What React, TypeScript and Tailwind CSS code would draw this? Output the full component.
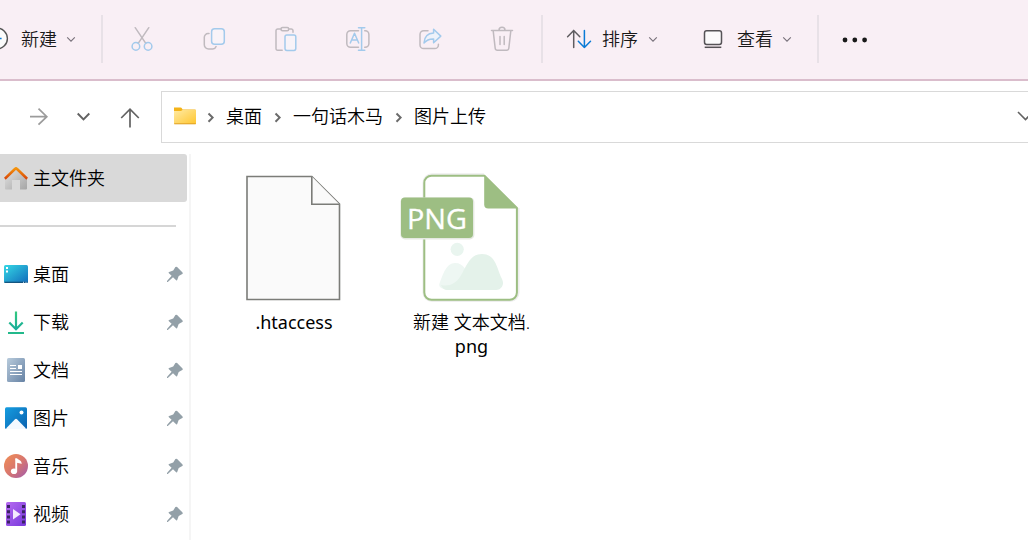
import React from "react";

type IconProps = { children: React.ReactNode; className?: string };

function ToolIcon({ children, className = "" }: IconProps) {
  return (
    <svg
      className={`size-8 shrink-0 ${className}`}
      viewBox="0 0 32 32"
      fill="none"
      stroke="#c0babf"
      strokeWidth="1.5"
      strokeLinecap="round"
      strokeLinejoin="round"
    >
      {children}
    </svg>
  );
}

const BLUE = "#a3caec";

const actions: { name: string; icon: React.ReactNode }[] = [
  {
    name: "cut",
    icon: (
      <>
        <path d="M9.2 4.7 19.8 20.4M22.8 4.7 12.2 20.4" />
        <circle cx="9.9" cy="23.4" r="3.8" stroke={BLUE} />
        <circle cx="22.1" cy="23.4" r="3.8" stroke={BLUE} />
      </>
    ),
  },
  {
    name: "copy",
    icon: (
      <>
        <path d="M11 10.6h-1a3.7 3.7 0 0 0-3.7 3.7v7.4a4.3 4.3 0 0 0 4.3 4.3h4.2a3.6 3.6 0 0 0 3.3-2.4" />
        <rect x="13.6" y="5.7" width="12.7" height="15.6" rx="3" fill="#f8f3f8" stroke={BLUE} />
      </>
    ),
  },
  {
    name: "paste",
    icon: (
      <>
        <path d="M11 6H7.7A1.7 1.7 0 0 0 6 7.7v17.6a1.7 1.7 0 0 0 1.7 1.9h4.5M18.8 6h2.5A1.7 1.7 0 0 1 23 7.7v1.5" />
        <rect x="11" y="4.6" width="7.7" height="3.2" rx="1.5" />
        <rect x="15" y="12" width="10.8" height="15.4" rx="1.8" fill="#f8f3f8" stroke={BLUE} />
      </>
    ),
  },
  {
    name: "rename",
    icon: (
      <>
        <path d="M16.5 7.7h-8a3.7 3.7 0 0 0-3.7 3.7v9.2a3.7 3.7 0 0 0 3.7 3.7h8M22.7 7.7h.5a3.7 3.7 0 0 1 3.7 3.7v9.2a3.7 3.7 0 0 1-3.7 3.7h-.5" />
        <path d="m8.3 20 4.2-9.8L16.7 20M9.7 17h5.600M19.6 4.800v22.5M16.5 4.8h6.300M16.5 27.3h6.300" stroke={BLUE} />
      </>
    ),
  },
  {
    name: "share",
    icon: (
      <>
        <path d="M14 7.7H9.7A3.7 3.7 0 0 0 6 11.4v10.5a3.7 3.7 0 0 0 3.7 3.7h11a3.7 3.7 0 0 0 3.7-3.7v-.7" />
        <path d="M10 20c.3-6 4-9.7 9.6-10V6.2l7.2 6.9-7.2 6.7v-3.9c-4.2-.2-7 1-9.6 4.100Z" fill="#eef2fa" stroke={BLUE} />
      </>
    ),
  },
  {
    name: "delete",
    icon: (
      <path d="M5.5 7.5h21M13 7.2a3 3 0 0 1 6 0M7.2 7.8l2 17.5a2.2 2.2 0 0 0 2.2 2h9.2a2.2 2.2 0 0 0 2.2-2l2-17.5M14 13.5v8M18.2 13.5v8" />
    ),
  },
];

function SmallChevron() {
  return (
    <svg className="size-2.5 shrink-0" viewBox="0 0 10 10" fill="none" stroke="#77717a" strokeWidth="1.1">
      <path d="m1.2 3.3 3.8 3.8 3.8-3.8" />
    </svg>
  );
}

function Divider() {
  return <div className="h-12 w-0.5 shrink-0 bg-[#e8e1e7]" />;
}

function Toolbar() {
  return (
    <header className="flex h-[81px] shrink-0 items-center border-b-2 border-[#dabdcc] bg-[#f9eff5] pb-px text-[#191919]">
      <div className="flex w-[101px] shrink-0 items-center">
        <svg className="h-8 w-[21px] shrink-0" viewBox="0 0 21 32" fill="none">
          <circle cx="-3" cy="15.5" r="10.4" fill="#fbfbfb" stroke="#555" strokeWidth="1.4" />
          <path d="M-8 15.500h9.600" stroke="#0a7bd6" strokeWidth="1.5" />
        </svg>
        <span className="mr-[9px]">新建</span>
        <SmallChevron />
      </div>
      <Divider />
      <div className="mx-[3px] flex">
        {actions.map((a) => (
          <div key={a.name} className="flex w-[72px] justify-center">
            <ToolIcon>{a.icon}</ToolIcon>
          </div>
        ))}
      </div>
      <Divider />
      <div className="ml-5 flex items-center">
        <ToolIcon className="mr-[7px]">
          <path d="M10.7 24.5V7.5M4.6 13.7l6.1-6.2 6.1 6.200" stroke="#5f5c60" />
          <path d="M21.4 7.5v17M15.3 18.3l6.1 6.2 6.1-6.2" stroke="#0a7bd6" />
        </ToolIcon>
        <span className="mr-2.5">排序</span>
        <SmallChevron />
      </div>
      <div className="ml-[39px] flex items-center">
        <ToolIcon className="mr-2">
          <rect x="7.5" y="7.7" width="17" height="13.8" rx="2.2" fill="#fbfafb" stroke="#555256" />
          <path d="M7.7 24.3h16.6" stroke="#555256" strokeLinecap="butt" />
        </ToolIcon>
        <span className="mr-[9px]">查看</span>
        <SmallChevron />
      </div>
      <div className="ml-[25px] flex items-center">
        <Divider />
        <svg className="ml-5 size-8" viewBox="0 0 32 32" fill="#191919">
          <circle cx="6" cy="17" r="2.4" />
          <circle cx="15.800" cy="17" r="2.4" />
          <circle cx="25.6" cy="17" r="2.4" />
        </svg>
      </div>
    </header>
  );
}

function Crumb({ label }: { label: string }) {
  return (
    <>
      <svg className="mr-[7px] ml-2 size-4 shrink-0" viewBox="0 0 16 16" fill="none" stroke="#6b6b6b" strokeWidth="2">
        <path d="m5.500 4.500 4.100 4.100-4.100 4.100" />
      </svg>
      <span className="pb-0.5">{label}</span>
    </>
  );
}

function AddressRow() {
  return (
    <div className="flex h-[73px] shrink-0 items-start pt-2.5">
      <div className="flex h-[52px] w-[161px] shrink-0 items-center">
        <svg className="ml-[26px] size-6" viewBox="0 0 24 24" fill="none" stroke="#9b9b9b" strokeWidth="1.7">
          <path d="M4 11.700h16.500M12.500 3.700l8.300 8-8.300 8" />
        </svg>
        <svg className="ml-[22px] size-6" viewBox="0 0 24 24" fill="none" stroke="#626262" strokeWidth="1.9">
          <path d="m5.700 8.500 5.800 5.900 5.800-5.900" />
        </svg>
        <svg className="ml-[22px] size-6" viewBox="0 0 24 24" fill="none" stroke="#626262" strokeWidth="1.7">
          <path d="M12 22.500v-18M3.200 13l8.800-8.900 8.800 8.900" />
        </svg>
      </div>
      <div className="flex h-[52px] flex-1 items-center overflow-hidden border border-r-0 border-[#d9d9d9] text-black">
        <svg className="ml-[11px] h-6 w-[26px] shrink-0" viewBox="0 0 26 24">
          <defs>
            <linearGradient id="folder" x1="0" y1="0" x2="1" y2="1">
              <stop stopColor="#ffeaa3" />
              <stop offset="1" stopColor="#ffc62f" />
            </linearGradient>
          </defs>
          <path d="M1 2.500h6.500q1 0 1.500 1l.5 1H22q1 0 1 1v13H1Z" fill="#f4b318" />
          <path d="M1 6h7l1.500-1H23v13.500q0 .5-.5.500h-21q-.5 0-.5-.5Z" fill="url(#folder)" />
          <path d="M1.300 18.800h21.400" stroke="#dfa027" />
        </svg>
        <div className="-ml-1 flex items-center">
          <Crumb label="桌面" />
          <Crumb label="一句话木马" />
          <Crumb label="图片上传" />
        </div>
        <svg className="ml-auto h-6 w-3 shrink-0" viewBox="0 0 12 24" fill="none" stroke="#626262" strokeWidth="1.6">
          <path d="m2 7 7.500 7.500L17 7" />
        </svg>
      </div>
    </div>
  );
}

const quickLinks: { label: string; icon: React.ReactNode }[] = [
  {
    label: "桌面",
    icon: (
      <>
        <defs>
          <linearGradient id="desk" x1="0" y1="0" x2="1" y2="1">
            <stop stopColor="#35d8e5" />
            <stop offset="1" stopColor="#116bbb" />
          </linearGradient>
        </defs>
        <rect y="3" width="24" height="18" rx="1.5" fill="url(#desk)" />
        <path d="M2 6h2M2 9.500h2" stroke="white" strokeWidth="2" />
        <path d="M.5 20.300h23" stroke="#155078" strokeWidth="1.2" />
        <path d="M19 20.300h1M21.500 20.300h1" stroke="#d5edff" strokeWidth="1" />
      </>
    ),
  },
  {
    label: "下载",
    icon: (
      <>
        <defs>
          <linearGradient id="down" x1="0" y1="0" x2="0" y2="24" gradientUnits="userSpaceOnUse">
            <stop stopColor="#35cb7c" />
            <stop offset="1" stopColor="#11a6a1" />
          </linearGradient>
        </defs>
        <path d="M12 1.500V19M5.300 12.500 12 19.200l6.700-6.700" fill="none" stroke="url(#down)" strokeWidth="2.2" />
        <path d="M4 23h16" stroke="#22b98b" strokeWidth="2" />
      </>
    ),
  },
  {
    label: "文档",
    icon: (
      <>
        <defs>
          <linearGradient id="doc" x1="0" y1="0" x2="1" y2="1">
            <stop stopColor="#b8cbdc" />
            <stop offset="1" stopColor="#6682a4" />
          </linearGradient>
        </defs>
        <rect x="3" width="18" height="24" rx="1.5" fill="url(#doc)" />
        <path d="M6 7.500h6M6 10.500h6M6 13.500h12M6 16.500h12" stroke="white" strokeWidth="1" />
        <rect x="14" y="7" width="4" height="4" fill="white" />
      </>
    ),
  },
  {
    label: "图片",
    icon: (
      <>
        <defs>
          <linearGradient id="pic" x1="0" y1="0" x2="1" y2="1">
            <stop stopColor="#159de0" />
            <stop offset="1" stopColor="#0b61af" />
          </linearGradient>
        </defs>
        <rect x="1" y="1.3" width="22" height="21.8" rx="1.5" fill="url(#pic)" />
        <path d="m2 22.500 9-9.300q1-1 2 0l9 9.300q-.5.500-1.500.5h-17q-1 0-1.500-.5Z" fill="#f4f9ff" />
        <circle cx="17.5" cy="6.5" r="2" fill="white" />
      </>
    ),
  },
  {
    label: "音乐",
    icon: (
      <>
        <defs>
          <linearGradient id="music" x1="0" y1="0" x2="1" y2="1">
            <stop stopColor="#f18f54" />
            <stop offset=".5" stopColor="#d9776e" />
            <stop offset="1" stopColor="#a15bae" />
          </linearGradient>
        </defs>
        <circle cx="12" cy="12" r="12" fill="url(#music)" />
        <path d="M12.200 4.500v12.700" stroke="white" strokeWidth="1.9" />
        <path d="M11.300 4.500h1.900c.7 1.500 4.500 1 4.500 5.500-1.700-1-3.500-.6-5-1.200Z" fill="white" />
        <ellipse cx="10" cy="17.2" rx="3.1" ry="2.8" fill="white" />
      </>
    ),
  },
  {
    label: "视频",
    icon: (
      <>
        <defs>
          <linearGradient id="video" x1="0" y1="0" x2="1" y2="1">
            <stop stopColor="#b66af0" />
            <stop offset="1" stopColor="#7839dc" />
          </linearGradient>
        </defs>
        <rect x="2" width="20" height="24" rx="1.5" fill="url(#video)" />
        <path d="M4.500 3v20M19.500 3v20" stroke="#3a2464" strokeWidth="3" strokeDasharray="3 2.200" />
        <path d="M9 7v10.500l7.500-5.200Z" fill="#f4eafe" />
      </>
    ),
  },
];

function Pin() {
  return (
    <svg className="mr-1.5 ml-auto size-4 shrink-0" viewBox="0 0 16 16" fill="#93a0a8">
      <path d="M8.400 1.100q.8-.9 1.700 0l5.200 5.200q.9.900 0 1.600l-3.600 2-1.500 4q-.5 1-1.300.2L6 11.300.800 15.900H0v-.8l4.600-5.300-2.700-2.600q-.8-.9.200-1.300L6.200 4.500Z" />
    </svg>
  );
}

function Sidebar() {
  return (
    <aside className="w-[191px] shrink-0 border-r-2 border-[#f5f5f5] text-black">
      <div className="flex h-12 w-[187px] items-center rounded-r-[3px] bg-[#d9d9d9] pl-1">
        <svg className="mr-[5px] size-6" viewBox="0 0 24 24">
          <defs>
            <linearGradient id="wall" x1="0" y1="0" x2="1" y2="1">
              <stop stopColor="#e2e2e2" />
              <stop offset="1" stopColor="#a5a5a5" />
            </linearGradient>
            <linearGradient id="roof" x1="0" y1="0" x2="0" y2="1">
              <stop stopColor="#f4930b" />
              <stop offset="1" stopColor="#d84709" />
            </linearGradient>
          </defs>
          <path d="M1 13 12 3.500 23 13v9.500q0 1-1 1h-6V14H8v9.500H2q-1 0-1-1Z" fill="url(#wall)" />
          <path d="m.8 12.700 10.400-9.900q.8-.8 1.600 0l10.400 9.900" fill="none" stroke="url(#roof)" strokeWidth="2.6" />
        </svg>
        主文件夹
      </div>
      <div className="mt-[23px] mb-[23px] h-0.5 w-44 bg-[#d6d6d6]" />
      <nav>
        {quickLinks.map((q) => (
          <div key={q.label} className="flex h-12 items-center pl-1">
            <svg className="mr-[5px] size-6 shrink-0" viewBox="0 0 24 24">
              {q.icon}
            </svg>
            {q.label}
            <Pin />
          </div>
        ))}
      </nav>
    </aside>
  );
}

function FileGrid() {
  return (
    <main className="flex items-start pt-4 pl-[14px] text-center leading-6 text-black">
      <div className="flex w-[178px] flex-col items-center">
        <svg className="h-[140px] w-32" viewBox="0 0 128 140" fill="#fafafa" stroke="#7b7c78" strokeWidth="1.6">
          <path d="M17 6.500h64.800l27.700 27.700v95.300H17Z" />
          <path d="M81.800 6.500v27.700h27.700" />
        </svg>
        <span className="font-normal">.htaccess</span>
      </div>
      <div className="flex w-[177px] flex-col items-center">
        <svg className="mr-8 h-[140px] w-32" viewBox="0 0 128 140">
          <path
            d="M92 5.500H40a7.300 7.300 0 0 0-7.300 7.300v109.600a7.300 7.300 0 0 0 7.300 7.300h78a7.300 7.300 0 0 0 7.300-7.300V38"
            fill="none"
            stroke="#eeeeee"
            strokeWidth="4.5"
          />
          <path
            d="M92.500 5.700h-53a7.200 7.200 0 0 0-7.200 7.200v109.700a7.200 7.200 0 0 0 7.200 7.200h78.200a7.200 7.200 0 0 0 7.200-7.200V38Z"
            fill="white"
            stroke="#9dbe83"
            strokeWidth="2"
          />
          <path d="M92.200 5 125.700 38.500H96.200a4 4 0 0 1-4-4Z" fill="#9dbe83" />
          <rect x="8.4" y="27.4" width="74" height="42" rx="4.5" fill="#e5e9e2" />
          <rect x="9" y="27.4" width="72" height="40.6" rx="4" fill="#9dbe83" />
          <text
            x="15"
            y="58.7"
            fill="white"
            stroke="white"
            strokeWidth="0.3"
            fontFamily="Open Sans, Noto Sans, sans-serif"
            fontSize="27.5"
            fontWeight="400"
            textLength="60"
            lengthAdjust="spacingAndGlyphs"
          >
            PNG
          </text>
          <circle cx="65.2" cy="79.3" r="6.6" fill="#e9f5ef" />
          <path d="M48 112c3-7 6-19 15-19s12 8 14 16l-6 10H54c-6 0-8-3-6-7Z" fill="#eef7f3" />
          <path d="M49 115c9 2 15-2 19-8 6-9 9-23 22-23 14 0 15 15 20 25 3 6-1 11-6 11H55q-4 0-6-5Z" fill="#e4f2ea" />
        </svg>
        <span className="w-[124px]">
          新建 文本文档.
          <br />
          <span className="font-normal">png</span>
        </span>
      </div>
    </main>
  );
}

export default function App() {
  return (
    <div className="flex h-[540px] w-[1028px] flex-col overflow-hidden bg-white font-['Noto_Sans','Noto_Sans_CJK_SC',sans-serif] text-[18px] leading-6 font-[350] whitespace-nowrap">
      <Toolbar />
      <AddressRow />
      <div className="flex min-h-0 flex-1">
        <Sidebar />
        <FileGrid />
      </div>
    </div>
  );
}
